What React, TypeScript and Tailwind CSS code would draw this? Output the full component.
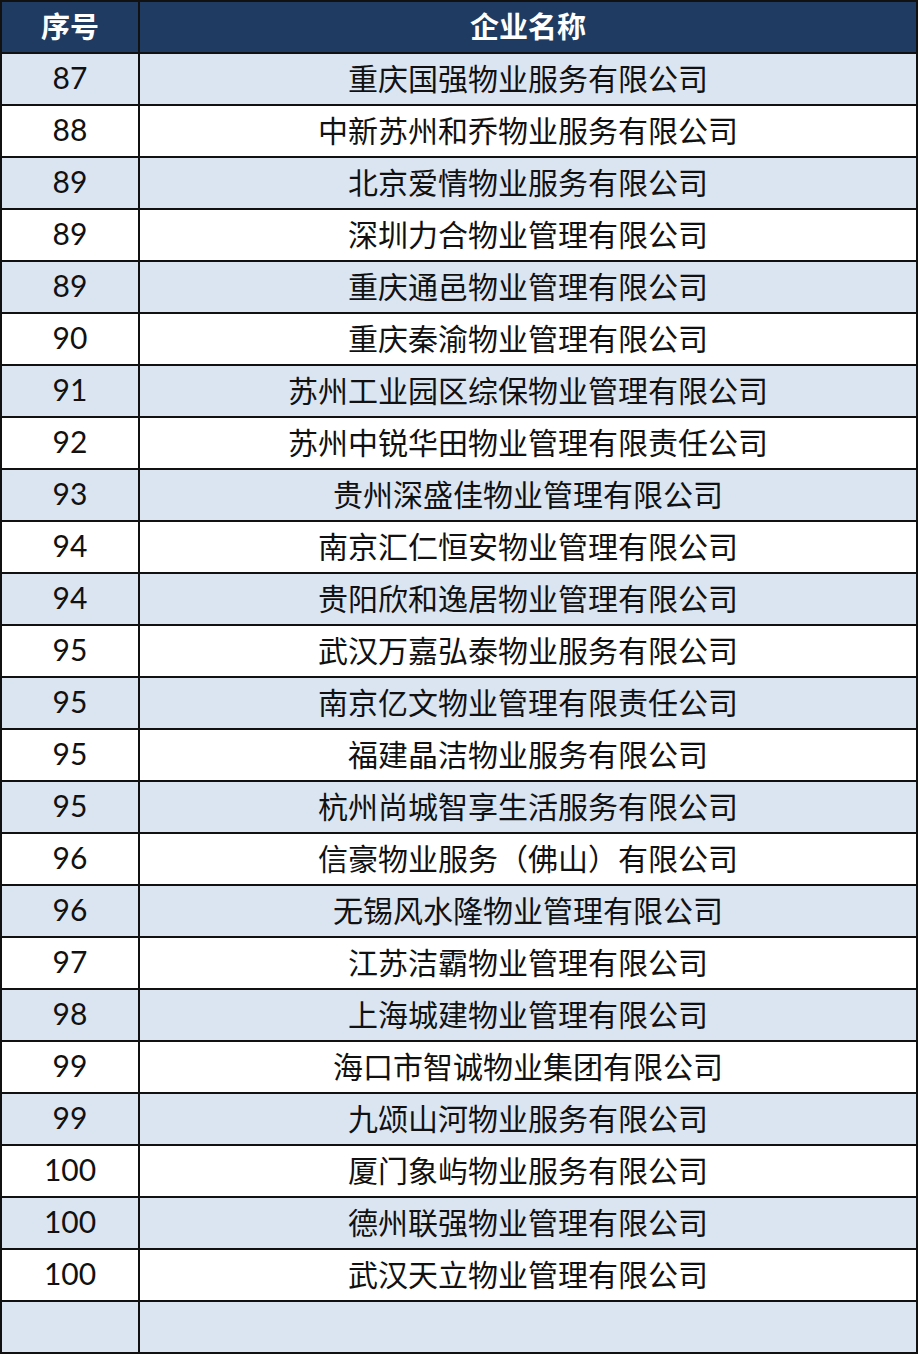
const rows: [string, string][] = [
  ['87', '重庆国强物业服务有限公司'],
  ['88', '中新苏州和乔物业服务有限公司'],
  ['89', '北京爱情物业服务有限公司'],
  ['89', '深圳力合物业管理有限公司'],
  ['89', '重庆通邑物业管理有限公司'],
  ['90', '重庆秦渝物业管理有限公司'],
  ['91', '苏州工业园区综保物业管理有限公司'],
  ['92', '苏州中锐华田物业管理有限责任公司'],
  ['93', '贵州深盛佳物业管理有限公司'],
  ['94', '南京汇仁恒安物业管理有限公司'],
  ['94', '贵阳欣和逸居物业管理有限公司'],
  ['95', '武汉万嘉弘泰物业服务有限公司'],
  ['95', '南京亿文物业管理有限责任公司'],
  ['95', '福建晶洁物业服务有限公司'],
  ['95', '杭州尚城智享生活服务有限公司'],
  ['96', '信豪物业服务（佛山）有限公司'],
  ['96', '无锡风水隆物业管理有限公司'],
  ['97', '江苏洁霸物业管理有限公司'],
  ['98', '上海城建物业管理有限公司'],
  ['99', '海口市智诚物业集团有限公司'],
  ['99', '九颂山河物业服务有限公司'],
  ['100', '厦门象屿物业服务有限公司'],
  ['100', '德州联强物业管理有限公司'],
  ['100', '武汉天立物业管理有限公司'],
  ['', ''],
];

export default function App() {
  return (
    <div className="w-[918px] h-[1354px] bg-white">
      <div className="border-2 border-[#111] w-[918px] [font-family:'Noto_Sans_CJK_SC',sans-serif]">
        <div className="flex h-[50px] bg-[#1f3b62] text-white font-bold text-[29px]">
          <div className="w-[138px] flex items-center justify-center pb-[3px] border-r-2 border-[#111]">序号</div>
          <div className="flex-1 flex items-center justify-center pb-[3px]">企业名称</div>
        </div>
        {rows.map(([no, name], i) => (
          <div
            key={i}
            className={`flex h-[52px] border-t-2 border-[#111] text-[#111] ${i % 2 === 0 ? 'bg-[#dbe5f1]' : 'bg-white'}`}
          >
            <div className="w-[138px] flex items-center justify-center pb-[3px] border-r-2 border-[#111] text-[30px] [font-family:Lato,sans-serif]">
              {no}
            </div>
            <div className="flex-1 flex items-center justify-center pb-[4px] text-[30px]">{name}</div>
          </div>
        ))}
      </div>
    </div>
  );
}
